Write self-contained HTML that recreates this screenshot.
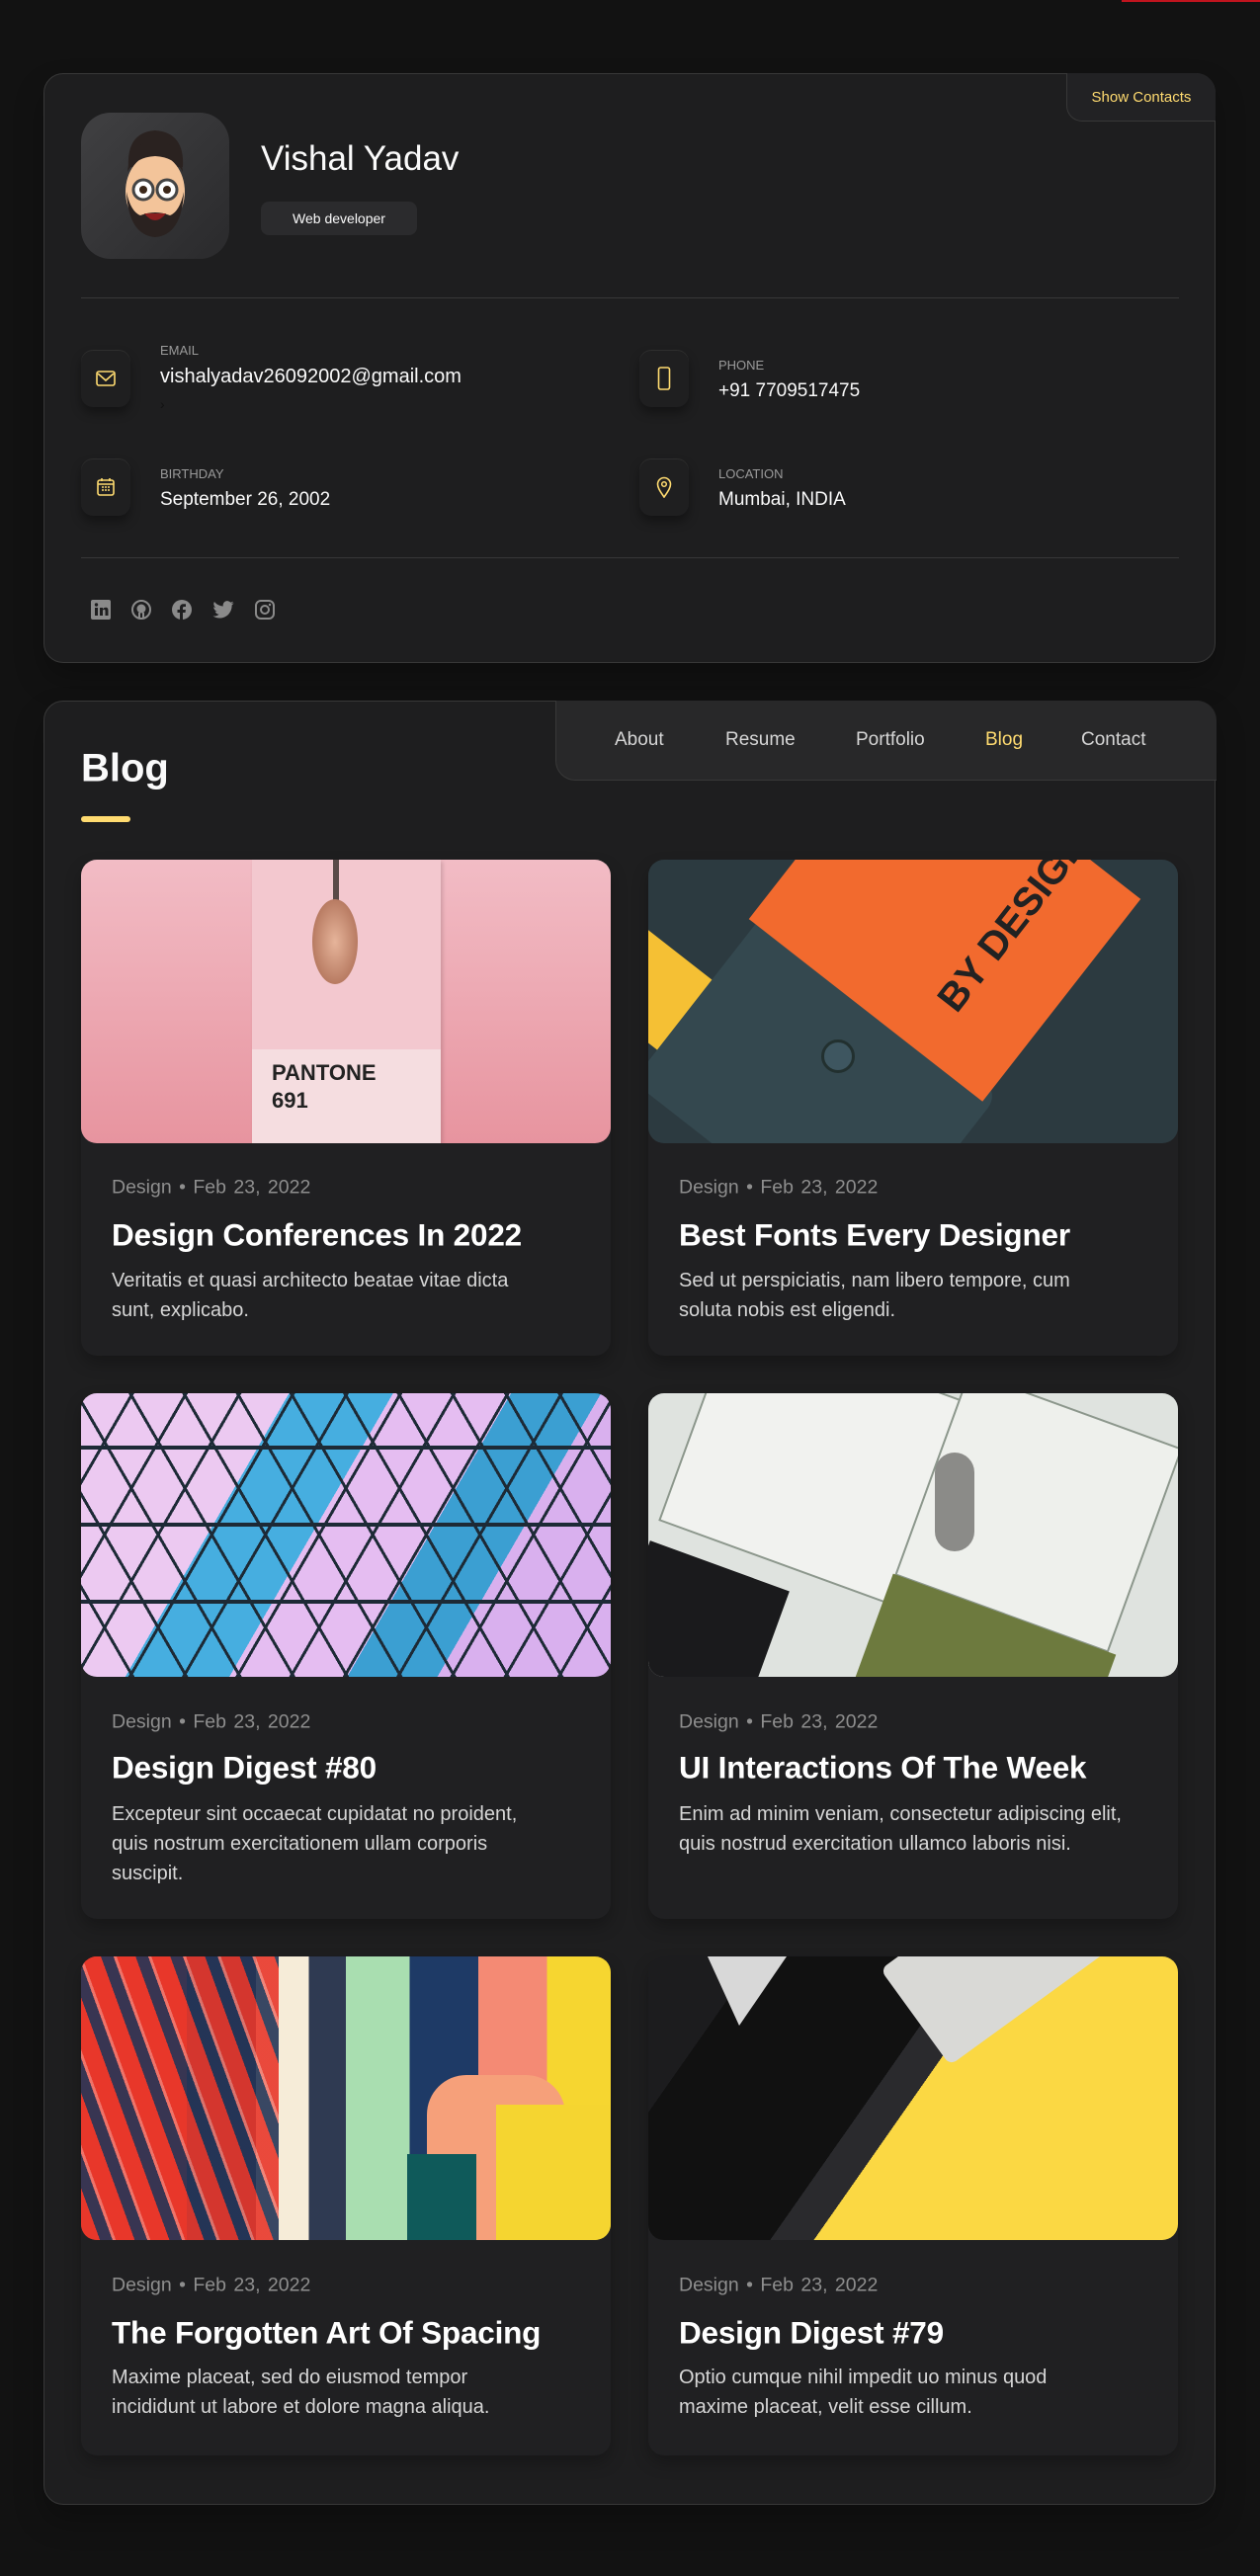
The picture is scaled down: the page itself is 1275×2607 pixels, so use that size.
<!DOCTYPE html>
<html><head><meta charset="utf-8">
<style>
*{box-sizing:border-box;margin:0;padding:0}
body{width:1275px;height:2607px;background:#121212;font-family:"Liberation Sans",sans-serif;color:#fafafa;position:relative;overflow:hidden}
.abs{position:absolute}
.card{position:absolute;left:44px;width:1186px;background:#1e1e1f;border:1px solid #383838;border-radius:20px;box-shadow:0 16px 30px rgba(0,0,0,.25)}
.ib{position:absolute;width:50px;height:58px;border-radius:12px;background:#1f1f20;box-shadow:0 6px 10px rgba(0,0,0,.35),inset 0 1px 0 #2e2e2e;display:flex;align-items:center;justify-content:center}
.lbl{position:absolute;font-size:13px;color:#9a9a9a;text-transform:uppercase}
.val{position:absolute;font-size:19px;color:#fafafa}
.post{position:absolute;width:536px;background:#202022;border-radius:16px;box-shadow:0 8px 16px rgba(0,0,0,.25)}
.img{position:absolute;left:0;top:0;width:536px;height:287px;border-radius:16px;overflow:hidden}
.meta{position:absolute;left:31px;font-size:19.5px;color:#8e8e8e;transform:translateY(-50%);word-spacing:2px}
.ttl{position:absolute;left:31px;font-size:31.5px;font-weight:bold;color:#fff;transform:translateY(-50%);white-space:nowrap;letter-spacing:-.2px}
.desc{position:absolute;left:31px;top:0;width:490px;font-size:20px;line-height:30px;color:#d6d6d6;white-space:nowrap}
.nav{position:absolute;font-size:19px;color:#d6d6d6;top:40px;transform:translateY(-50%);font-weight:500}
</style></head><body>
<div class="abs" style="left:1135px;top:0;width:140px;height:2px;background:#c0141e"></div>

<div class="card" style="top:74px;height:597px">
  <div class="abs" style="right:-1px;top:-1px;width:151px;height:49px;background:#222224;border-radius:0 20px 0 16px;border:1px solid #383838;border-right:none;border-top:none;color:#ffdb70;font-size:15px;display:flex;align-items:center;justify-content:center">Show Contacts</div>
  <div class="abs" style="left:37px;top:39px;width:150px;height:148px;border-radius:30px;background:linear-gradient(135deg,#404042,#2a2a2c)">
    <svg width="150" height="148" viewBox="0 0 150 148">
      <path d="M48 55 Q46 20 75 18 Q105 20 103 55 Z" fill="#2a2220"/>
      <ellipse cx="75" cy="80" rx="30" ry="38" fill="#f3c49a"/>
      <path d="M46 80 Q48 124 75 126 Q102 124 104 80 Q100 100 90 104 Q75 98 60 104 Q50 100 46 80Z" fill="#2a2220"/>
      <path d="M47 60 Q50 28 75 30 Q100 28 103 60 Q95 45 75 44 Q55 45 47 60Z" fill="#2a2220"/>
      <circle cx="63" cy="78" r="10" fill="#fff" stroke="#444" stroke-width="3"/><circle cx="87" cy="78" r="10" fill="#fff" stroke="#444" stroke-width="3"/>
      <circle cx="63" cy="78" r="4" fill="#3a2618"/><circle cx="87" cy="78" r="4" fill="#3a2618"/>
      <path d="M64 102 Q75 116 86 102 Z" fill="#8a1f1f"/>
    </svg>
  </div>
  <div class="abs" style="left:219px;top:86px;font-size:35px;transform:translateY(-50%);font-weight:500">Vishal Yadav</div>
  <div class="abs" style="left:219px;top:129px;width:158px;height:34px;border-radius:8px;background:#2b2b2d;font-size:14px;color:#fafafa;display:flex;align-items:center;justify-content:center">Web developer</div>
  <div class="abs" style="left:37px;top:226px;width:1111px;height:1px;background:#383838"></div>

  <div class="ib" style="left:37px;top:279px"><svg width="20" height="16" viewBox="0 0 20 16"><rect x="1" y="1" width="18" height="14" rx="2" fill="none" stroke="#ffdb70" stroke-width="1.6"/><path d="M2 3 L10 10 L18 3" fill="none" stroke="#ffdb70" stroke-width="1.6"/></svg></div>
  <div class="lbl" style="left:117px;top:272px">Email</div>
  <div class="val" style="left:117px;top:295px;font-size:20px">vishalyadav26092002@gmail.com</div>
  <div class="abs" style="left:117px;top:326px;font-size:14px;color:#111">›</div>

  <div class="ib" style="left:602px;top:279px"><svg width="14" height="24" viewBox="0 0 14 24"><rect x="1.5" y="1" width="11" height="22" rx="2" fill="none" stroke="#ffdb70" stroke-width="1.6"/></svg></div>
  <div class="lbl" style="left:682px;top:287px">Phone</div>
  <div class="val" style="left:682px;top:310px">+91 7709517475</div>

  <div class="ib" style="left:37px;top:389px"><svg width="20" height="20" viewBox="0 0 20 20"><rect x="2" y="3" width="16" height="15" rx="2" fill="none" stroke="#ffdb70" stroke-width="1.6"/><path d="M2 7 H18 M6 1 V4 M14 1 V4" stroke="#ffdb70" stroke-width="1.6"/><path d="M6 10h2M9 10h2M12 10h2M6 13h2M9 13h2M12 13h2" stroke="#ffdb70" stroke-width="1.5"/></svg></div>
  <div class="lbl" style="left:117px;top:397px">Birthday</div>
  <div class="val" style="left:117px;top:420px">September 26, 2002</div>

  <div class="ib" style="left:602px;top:389px"><svg width="16" height="22" viewBox="0 0 16 22"><path d="M8 21 C3 14 1.5 11 1.5 8 A6.5 6.5 0 0 1 14.5 8 C14.5 11 13 14 8 21Z" fill="none" stroke="#ffdb70" stroke-width="1.6"/><circle cx="8" cy="8" r="2.3" fill="none" stroke="#ffdb70" stroke-width="1.5"/></svg></div>
  <div class="lbl" style="left:682px;top:397px">Location</div>
  <div class="val" style="left:682px;top:420px">Mumbai, INDIA</div>

  <div class="abs" style="left:37px;top:489px;width:1111px;height:1px;background:#383838"></div>
  <div class="abs" style="left:47px;top:532px;display:flex;gap:21px;align-items:center">
    <svg width="20" height="20" viewBox="0 0 20 20"><rect width="20" height="20" rx="2" fill="#8a8a8a"/><rect x="4" y="8" width="3" height="8" fill="#1e1e1f"/><circle cx="5.5" cy="5" r="1.7" fill="#1e1e1f"/><path d="M9 8h3v1.5c.6-1 1.6-1.7 3-1.7 2 0 2.5 1.3 2.5 3.2V16h-3v-4.5c0-1-.3-1.6-1.2-1.6-1 0-1.3.7-1.3 1.7V16H9Z" fill="#1e1e1f"/></svg>
    <svg width="20" height="20" viewBox="0 0 20 20"><circle cx="10" cy="10" r="9" fill="none" stroke="#8a8a8a" stroke-width="2"/><circle cx="10" cy="9" r="4.5" fill="#8a8a8a"/><path d="M8 13v6M12 13v6" stroke="#8a8a8a" stroke-width="2"/></svg>
    <svg width="20" height="20" viewBox="0 0 20 20"><circle cx="10" cy="10" r="10" fill="#8a8a8a"/><path d="M11 20v-7h2.5l.4-3H11V8.3c0-.8.3-1.3 1.4-1.3H14V4.3c-.3 0-1.2-.1-2.3-.1-2.3 0-3.7 1.3-3.7 3.8V10H5.5v3H8v7Z" fill="#1e1e1f"/></svg>
    <svg width="22" height="19" viewBox="0 0 22 19"><path d="M21.5 2.3c-.8.4-1.6.6-2.5.7.9-.6 1.6-1.4 1.900-2.4-.8.5-1.8.9-2.7 1A4.3 4.3 0 0 0 10.8 5.5 12.3 12.3 0 0 1 1.9 1 4.3 4.3 0 0 0 3.2 6.8c-.7 0-1.4-.2-2-.5 0 2.1 1.5 3.9 3.5 4.3-.6.2-1.3.2-2 .1.6 1.7 2.2 3 4.1 3A8.7 8.7 0 0 1 .5 15.5 12.3 12.3 0 0 0 7.2 17.5c8 0 12.4-6.7 12.4-12.4v-.6c.8-.6 1.5-1.3 1.9-2.2Z" fill="#8a8a8a"/></svg>
    <svg width="20" height="20" viewBox="0 0 20 20"><rect x="1" y="1" width="18" height="18" rx="5" fill="none" stroke="#8a8a8a" stroke-width="2"/><circle cx="10" cy="10" r="4" fill="none" stroke="#8a8a8a" stroke-width="2"/><circle cx="15" cy="5" r="1.2" fill="#8a8a8a"/></svg>
  </div>
</div>

<div class="card" style="top:709px;height:1826px">
  <div class="abs" style="left:517px;top:-1px;width:669px;height:81px;background:#282829;border:1px solid #383838;border-top:none;border-right:none;border-radius:0 20px 0 20px">
    <div class="nav" style="left:59px">About</div>
    <div class="nav" style="left:171px">Resume</div>
    <div class="nav" style="left:303px">Portfolio</div>
    <div class="nav" style="left:434px;color:#ffdb70">Blog</div>
    <div class="nav" style="left:531px">Contact</div>
  </div>
  <div class="abs" style="left:37px;top:68px;font-size:40px;font-weight:bold;transform:translateY(-50%)">Blog</div>
  <div class="abs" style="left:37px;top:116px;width:50px;height:6px;border-radius:3px;background:#ffdb70"></div>
</div>

<!-- Row 1 -->
<div class="post" style="left:82px;top:870px;height:502px">
  <div class="img" style="background:linear-gradient(180deg,#f2bcc5,#e7949f)">
    <div class="abs" style="left:173px;top:0;width:191px;height:287px;background:#f3c8cf;box-shadow:2px 2px 4px rgba(0,0,0,.15)"></div>
    <div class="abs" style="left:173px;top:192px;width:191px;height:95px;background:#f5dde0"></div>
    <div class="abs" style="left:255px;top:0;width:6px;height:50px;background:#5a4a48"></div>
    <div class="abs" style="left:234px;top:40px;width:46px;height:86px;border-radius:50%;background:radial-gradient(#e6b49a,#b87b62 70%,#5a3d36)"></div>
    <div class="abs" style="left:193px;top:202px;font-size:22px;font-weight:bold;color:#222;line-height:28px">PANTONE<br>691</div>
  </div>
  <div class="meta" style="top:332px">Design • Feb 23, 2022</div>
  <div class="ttl" style="top:380px">Design Conferences In 2022</div>
  <div class="desc" style="top:411px">Veritatis et quasi architecto beatae vitae dicta<br>sunt, explicabo.</div>
</div>
<div class="post" style="left:656px;top:870px;height:502px">
  <div class="img" style="background:#2c3a40">
    <div class="abs" style="left:-40px;top:40px;width:700px;height:90px;background:#f5c034;transform:rotate(38deg);transform-origin:0 0"></div>
    <div class="abs" style="left:20px;top:120px;width:300px;height:220px;background:#34484f;border-radius:20px;transform:rotate(38deg)"></div>
    <div class="abs" style="left:150px;top:-80px;width:300px;height:260px;background:#f26a2e;transform:rotate(38deg);transform-origin:50% 50%"></div>
    <div class="abs" style="left:260px;top:40px;font-size:40px;font-weight:bold;color:#222;transform:rotate(-52deg)">BY DESIGN</div>
    <div class="abs" style="left:175px;top:182px;width:34px;height:34px;border-radius:50%;background:#3e5660;border:3px solid #22302f"></div>
  </div>
  <div class="meta" style="top:332px">Design • Feb 23, 2022</div>
  <div class="ttl" style="top:380px">Best Fonts Every Designer</div>
  <div class="desc" style="top:411px">Sed ut perspiciatis, nam libero tempore, cum<br>soluta nobis est eligendi.</div>
</div>

<!-- Row 2 -->
<div class="post" style="left:82px;top:1410px;height:532px">
  <div class="img" style="background:repeating-linear-gradient(60deg,transparent 0 44px,#1d2a36 44px 47px),repeating-linear-gradient(-60deg,transparent 0 44px,#1d2a36 44px 47px),repeating-linear-gradient(0deg,transparent 0 74px,#1d2a36 74px 78px),linear-gradient(120deg,#ecc9f1 0 30%,#46aee0 30% 45%,#e5bdf1 45% 62%,#3b9fd2 62% 75%,#d9b0ee 75%)"></div>
  <div class="meta" style="top:333px">Design • Feb 23, 2022</div>
  <div class="ttl" style="top:379px">Design Digest #80</div>
  <div class="desc" style="top:411px">Excepteur sint occaecat cupidatat no proident,<br>quis nostrum exercitationem ullam corporis<br>suscipit.</div>
</div>
<div class="post" style="left:656px;top:1410px;height:532px">
  <div class="img" style="background:#dfe3df">
    <div class="abs" style="left:40px;top:-40px;width:260px;height:220px;background:#f1f2ef;transform:rotate(20deg);border:2px solid #8c978c"></div>
    <div class="abs" style="left:280px;top:10px;width:230px;height:220px;background:#eef0ec;transform:rotate(20deg);border:2px solid #8c978c"></div>
    <div class="abs" style="left:-30px;top:170px;width:150px;height:160px;background:#1a1a1c;transform:rotate(20deg)"></div>
    <div class="abs" style="left:220px;top:220px;width:240px;height:120px;background:#6d7a3e;transform:rotate(20deg)"></div>
    <div class="abs" style="left:290px;top:60px;width:40px;height:100px;background:#8b8b88;border-radius:20px"></div>
  </div>
  <div class="meta" style="top:333px">Design • Feb 23, 2022</div>
  <div class="ttl" style="top:379px">UI Interactions Of The Week</div>
  <div class="desc" style="top:411px">Enim ad minim veniam, consectetur adipiscing elit,<br>quis nostrud exercitation ullamco laboris nisi.</div>
</div>

<!-- Row 3 -->
<div class="post" style="left:82px;top:1980px;height:505px">
  <div class="img" style="background:linear-gradient(90deg,#e8372a 0 20%,#203152 20% 33%,#f6ecd8 33% 43%,#2f3a52 43% 50%,#a9deb0 50% 62%,#1e3a66 62% 75%,#f48a74 75% 88%,#f6d630 88%)">
    <div class="abs" style="left:0;top:0;width:200px;height:287px;background:repeating-linear-gradient(70deg,#e8372a 0 18px,#243556 18px 30px,#f07a70 30px 33px);opacity:.9"></div>
    <div class="abs" style="left:350px;top:120px;width:140px;height:167px;background:#f6a07a;border-radius:40px 40px 0 0"></div>
    <div class="abs" style="left:420px;top:150px;width:116px;height:137px;background:#f5d530"></div>
    <div class="abs" style="left:330px;top:200px;width:70px;height:87px;background:#0f5a5a"></div>
  </div>
  <div class="meta" style="top:333px">Design • Feb 23, 2022</div>
  <div class="ttl" style="top:381px">The Forgotten Art Of Spacing</div>
  <div class="desc" style="top:411px">Maxime placeat, sed do eiusmod tempor<br>incididunt ut labore et dolore magna aliqua.</div>
</div>
<div class="post" style="left:656px;top:1980px;height:505px">
  <div class="img" style="background:linear-gradient(125deg,#1c1c1e 0 15%,#111 15% 44%,#2a2a2d 44% 50%,#fbd843 50%)">
    <div class="abs" style="left:60px;top:0;width:80px;height:70px;background:#d8d8d8;clip-path:polygon(0 0,100% 0,40% 100%)"></div>
    <div class="abs" style="left:250px;top:-60px;width:210px;height:120px;background:#d9d9d6;transform:rotate(-36deg);border-radius:8px"></div>
  </div>
  <div class="meta" style="top:333px">Design • Feb 23, 2022</div>
  <div class="ttl" style="top:381px">Design Digest #79</div>
  <div class="desc" style="top:411px">Optio cumque nihil impedit uo minus quod<br>maxime placeat, velit esse cillum.</div>
</div>
</body></html>
